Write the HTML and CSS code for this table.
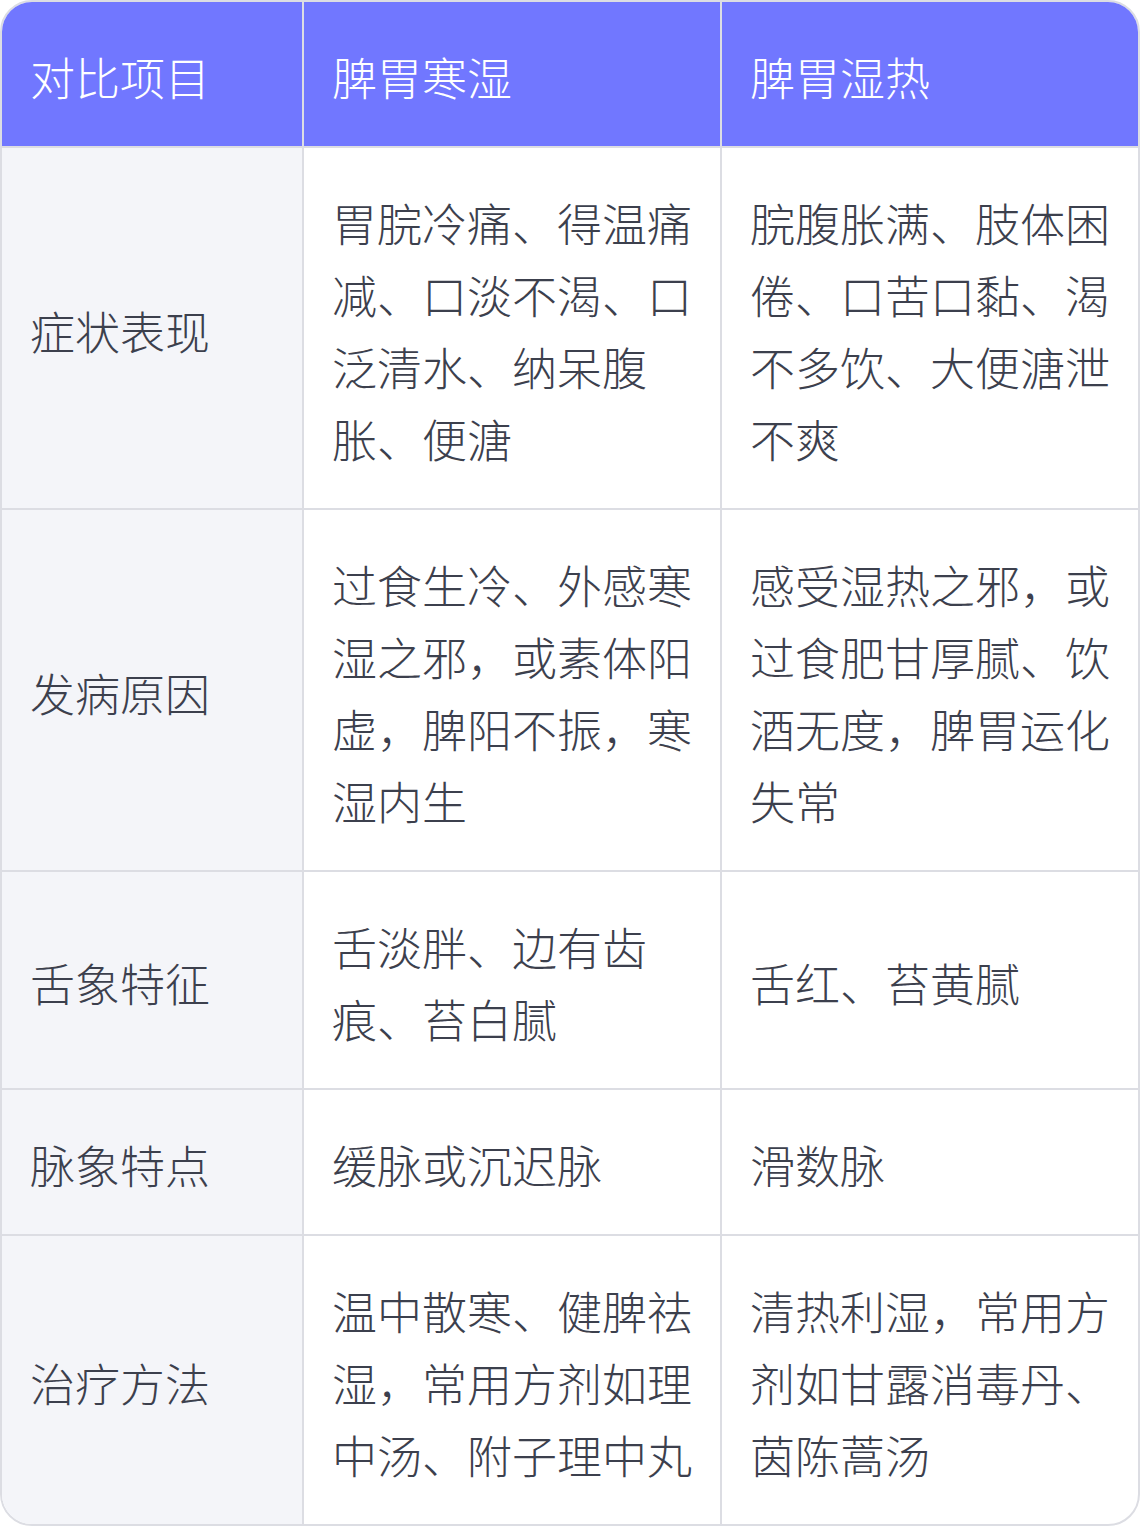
FILE: index.html
```html
<!DOCTYPE html>
<html lang="zh-CN">
<head>
    <meta charset="UTF-8">
    <meta name="viewport" content="width=device-width, initial-scale=1.0">
    <title>脾胃寒湿与脾胃湿热对比</title>
    <link rel="stylesheet" href="styles.css">
</head>

<body>
    <div class="table-wrap">
        <table class="compare-table">
            <thead>
                <tr>
                    <th class="col-item">对比项目</th>
                    <th class="col-a">脾胃寒湿</th>
                    <th class="col-b">脾胃湿热</th>
                </tr>
            </thead>
            <tbody>
                <tr>
                    <td class="item">症状表现</td>
                    <td>胃脘冷痛、得温痛减、口淡不渴、口泛清水、纳呆腹胀、便溏</td>
                    <td>脘腹胀满、肢体困倦、口苦口黏、渴不多饮、大便溏泄不爽</td>
                </tr>
                <tr>
                    <td class="item">发病原因</td>
                    <td>过食生冷、外感寒湿之邪，或素体阳虚，脾阳不振，寒湿内生</td>
                    <td>感受湿热之邪，或过食肥甘厚腻、饮酒无度，脾胃运化失常</td>
                </tr>
                <tr>
                    <td class="item">舌象特征</td>
                    <td>舌淡胖、边有齿痕、苔白腻</td>
                    <td>舌红、苔黄腻</td>
                </tr>
                <tr>
                    <td class="item">脉象特点</td>
                    <td>缓脉或沉迟脉</td>
                    <td>滑数脉</td>
                </tr>
                <tr>
                    <td class="item">治疗方法</td>
                    <td>温中散寒、健脾祛湿，常用方剂如理中汤、附子理中丸</td>
                    <td>清热利湿，常用方剂如甘露消毒丹、茵陈蒿汤</td>
                </tr>
            </tbody>
        </table>
    </div>
</body>
</html>
```

FILE: styles.css
```css
body
{
    margin: 0;
    background: #fff;
    font-family: "Noto Sans CJK SC", "Noto Sans", sans-serif;
}

.table-wrap
{
    width: 1140px;
    box-sizing: border-box;
    border: 2px solid #dcdde3;
    border-radius: 32px;
    overflow: hidden;
}

.compare-table
{
    width: 1136px;
    table-layout: fixed;
    border-collapse: separate;
    border-spacing: 0;
    font-size: 45px;
    line-height: 72px;
    font-weight: 300;
    color: #3c404d;
}

.compare-table th,
.compare-table td
{
    box-sizing: border-box;
    padding: 39px 26px 33px 28px;
    border-right: 2px solid #dcdde3;
    border-bottom: 2px solid #dcdde3;
    text-align: left;
    vertical-align: middle;
    font-weight: 300;
}

.compare-table th:last-child,
.compare-table td:last-child
{
    border-right: none;
}

.compare-table tbody tr:last-child td
{
    border-bottom: none;
}

.compare-table th
{
    background-color: #7177ff;
    color: #fff;
}

.col-item
{
    width: 302px;
}

.col-a
{
    width: 418px;
}

.compare-table td.item
{
    background-color: #f4f5f9;
}
```
